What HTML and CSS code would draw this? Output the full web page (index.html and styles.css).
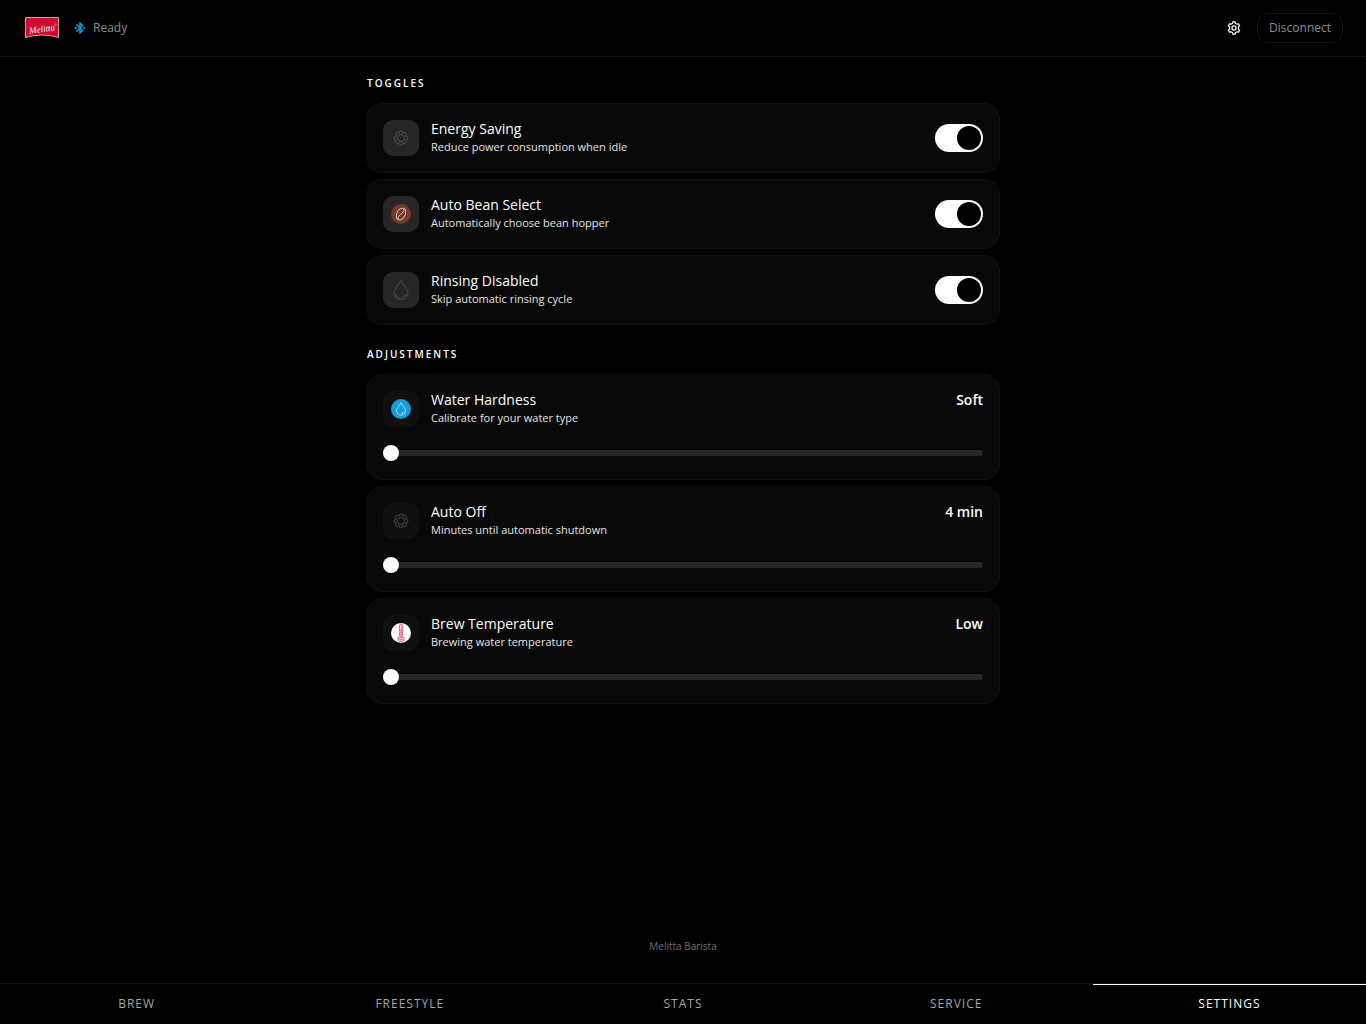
FILE: index.html
```
<!DOCTYPE html>
<html lang="en">

<head>
    <meta charset="UTF-8">
    <meta name="viewport" content="width=device-width, initial-scale=1.0">
    <title>Melitta Barista</title>
    <link rel="stylesheet" href="styles.css">
</head>

<body>
    <header class="header">
        <svg class="logo" viewBox="0 0 36 22" role="img" aria-label="Melitta">
            <path d="M1.5 .5H34.500V20.500Q18 15.500 1.500 20.500Z" fill="#d3072f" stroke="#c5a3a8" />
            <text class="logo-text" x="5" y="15" transform="rotate(-8 18 12)">Melitta</text>
            <circle cx="31.500" cy="7.500" r=".8" fill="none" stroke="#f5b5c0" stroke-width=".5" />
        </svg>
        <div class="status">
            <svg class="bluetooth" viewBox="0 0 24 24" fill="currentColor" stroke="currentColor" stroke-width=".6" aria-hidden="true">
                <path d="M19,10L17,12L19,14L21,12M14.88,16.29L13,18.17V14.41M13,5.83L14.88,7.71L13,9.58M17.71,7.71L12,2H11V9.58L6.41,5L5,6.41L10.59,12L5,17.58L6.41,19L11,14.41V22H12L17.7,16.29L13.41,12L17.71,7.71M7,12L5,10L3,12L5,14L7,12Z" />
            </svg>
            <span>Ready</span>
        </div>
        <button class="icon-btn" type="button" aria-label="Preferences">
            <svg viewBox="0 0 24 24" fill="none" stroke="currentColor" stroke-width="2.2" stroke-linejoin="round">
                <path d="M9.6 3.900 10 1.500h4l.4 2.400 2.900 1.700 2.300-.9 2 3.500-1.900 1.500v4.600l1.900 1.500-2 3.500-2.300-.9-2.900 1.700-.4 2.400h-4l-.4-2.400-2.900-1.700-2.300.9-2-3.500 1.900-1.500V9.700L2.400 8.200l2-3.500 2.300.9z" />
                <circle cx="12" cy="12" r="3.500" />
            </svg>
        </button>
        <button class="disconnect" type="button">Disconnect</button>
    </header>

    <main class="main">
        <section class="section">
            <h2>TOGGLES</h2>
            <label class="card row">
                <span class="tile tile-on">
                    <svg class="icon" viewBox="0 0 20 20" fill="none" stroke="#42454a" stroke-width="1.200">
                        <path d="M15 12.070A2.080 2.080 0 0 1 12.070 15A2.080 2.080 0 0 1 7.930 15A2.080 2.080 0 0 1 5 12.070A2.080 2.080 0 0 1 5 7.930A2.080 2.080 0 0 1 7.930 5A2.080 2.080 0 0 1 12.070 5A2.080 2.080 0 0 1 15 7.930A2.080 2.080 0 0 1 15 12.070Z" />
                        <circle cx="10" cy="10" r="3.400" />
                    </svg>
                </span>
                <span class="info">
                    <span class="title">Energy Saving</span>
                    <span class="desc">Reduce power consumption when idle</span>
                </span>
                <input class="switch" type="checkbox" role="switch" checked>
            </label>
            <label class="card row">
                <span class="tile tile-on">
                    <svg class="icon" viewBox="0 0 20 20" fill="none" stroke="#e0cdc6" stroke-width=".9">
                        <circle cx="10" cy="10" r="10" fill="#753a28" stroke="none" />
                        <ellipse cx="10" cy="10" rx="4.200" ry="6.300" transform="rotate(28 10 10)" />
                        <path d="M12.800 4.600c.7 3-1.400 4-2.800 5.400s-3.500 2.400-2.800 5.400" />
                    </svg>
                </span>
                <span class="info">
                    <span class="title">Auto Bean Select</span>
                    <span class="desc">Automatically choose bean hopper</span>
                </span>
                <input class="switch" type="checkbox" role="switch" checked>
            </label>
            <label class="card row">
                <span class="tile tile-on">
                    <svg class="icon" viewBox="0 0 20 20" fill="none" stroke="#43464b" stroke-width="1.100">
                        <path d="M10 .8C8 4.800 3 8.500 3 13a7 6.500 0 0 0 14 0C17 8.500 12 4.800 10 .8z" />
                        <path d="M4.500 13.500c.5 2.500 2.500 4 5 4.300M10.500 17.300c2.500-.2 4-1.500 4.700-3.300" />
                    </svg>
                </span>
                <span class="info">
                    <span class="title">Rinsing Disabled</span>
                    <span class="desc">Skip automatic rinsing cycle</span>
                </span>
                <input class="switch" type="checkbox" role="switch" checked>
            </label>
        </section>

        <section class="section">
            <h2>ADJUSTMENTS</h2>
            <div class="card">
                <div class="row">
                    <span class="tile">
                        <svg class="icon" viewBox="0 0 20 20" fill="none" stroke="#b5e3f5" stroke-width=".9">
                            <circle cx="10" cy="10" r="10" fill="#189dd3" stroke="none" />
                            <path d="M10 3.800C8.800 6.400 5.500 8.800 5.500 11.700a4.500 4.400 0 0 0 9 0C14.500 8.800 11.200 6.400 10 3.800z" />
                            <path d="M10.500 14.400c1.300-.2 2.200-.9 2.600-2" />
                        </svg>
                    </span>
                    <label class="info" for="hardness">
                        <span class="title">Water Hardness</span>
                        <span class="desc">Calibrate for your water type</span>
                    </label>
                    <output class="value" for="hardness">Soft</output>
                </div>
                <input class="slider" id="hardness" type="range" min="0" max="3" value="0">
            </div>
            <div class="card">
                <div class="row">
                    <span class="tile">
                        <svg class="icon" viewBox="0 0 20 20" fill="none" stroke="#393b3f" stroke-width="1.200">
                            <path d="M15 12.070A2.080 2.080 0 0 1 12.070 15A2.080 2.080 0 0 1 7.930 15A2.080 2.080 0 0 1 5 12.070A2.080 2.080 0 0 1 5 7.930A2.080 2.080 0 0 1 7.930 5A2.080 2.080 0 0 1 12.070 5A2.080 2.080 0 0 1 15 7.930A2.080 2.080 0 0 1 15 12.070Z" />
                            <circle cx="10" cy="10" r="3.400" />
                        </svg>
                    </span>
                    <label class="info" for="auto-off">
                        <span class="title">Auto Off</span>
                        <span class="desc">Minutes until automatic shutdown</span>
                    </label>
                    <output class="value" for="auto-off">4 min</output>
                </div>
                <input class="slider" id="auto-off" type="range" min="4" max="240" value="4">
            </div>
            <div class="card">
                <div class="row">
                    <span class="tile">
                        <svg class="icon" viewBox="0 0 20 20" fill="none" stroke="#f0557a" stroke-width=".9">
                            <circle cx="10" cy="10" r="10" fill="#fff" stroke="none" />
                            <path d="M8.500 13V2.500a1.500 1.500 0 0 1 3 0V13a3.100 3.100 0 1 1-3 0z" fill="#fbc4d0" />
                            <path d="M10 6v8M11.500 5H10M11.500 9H10" />
                            <circle cx="10" cy="15.600" r="1.300" fill="#fff" />
                        </svg>
                    </span>
                    <label class="info" for="temperature">
                        <span class="title">Brew Temperature</span>
                        <span class="desc">Brewing water temperature</span>
                    </label>
                    <output class="value" for="temperature">Low</output>
                </div>
                <input class="slider" id="temperature" type="range" min="0" max="2" value="0">
            </div>
        </section>
    </main>

    <footer class="footer">Melitta Barista</footer>

    <nav class="tabs">
        <a href="#brew">BREW</a>
        <a href="#freestyle">FREESTYLE</a>
        <a href="#stats">STATS</a>
        <a href="#service">SERVICE</a>
        <a class="active" href="#settings" aria-current="page">SETTINGS</a>
    </nav>
</body>

</html>
```
FILE: styles.css
```
* {
    margin: 0;
    padding: 0;
    box-sizing: border-box;
}

body {
    display: flex;
    flex-direction: column;
    min-height: 100vh;
    background-color: #000;
    color: #fff;
    font-family: "Open Sans", "Noto Sans", sans-serif;
}

button {
    font-family: inherit;
    background: none;
    border: 0;
    cursor: pointer;
}

/* header */
.header {
    display: flex;
    align-items: center;
    height: 57px;
    padding: 0 23px 0 24px;
    border-bottom: 1px solid #141414;
}

.logo {
    width: 36px;
    height: 22px;
}

.logo-text {
    font: italic 9px "Liberation Serif", serif;
    fill: #fff;
}

.status {
    display: flex;
    align-items: center;
    gap: 6px;
    margin-left: 13px;
    margin-right: auto;
    color: #8c8c8c;
    font-size: 12px;
    line-height: 16px;
}

.bluetooth {
    width: 14px;
    height: 14px;
    color: #0ea5dc;
}

.icon-btn {
    display: flex;
    padding: 8px;
    margin-right: 8px;
    color: #fff;
}

.icon-btn svg {
    width: 14px;
    height: 14px;
}

.disconnect {
    height: 30px;
    padding: 0 11px;
    border: 1px solid #141414;
    border-radius: 10px;
    color: #8c8c8c;
    font-size: 12px;
    line-height: 16px;
}

/* settings list */
.main {
    flex: 1;
    display: flex;
    flex-direction: column;
    gap: 22px;
    width: 100%;
    max-width: 634px;
    margin: 0 auto;
    padding-top: 19px;
}

.section {
    display: flex;
    flex-direction: column;
    gap: 6px;
}

.section h2 {
    margin-bottom: 6px;
    padding-left: 1px;
    font-size: 10px;
    font-weight: 600;
    line-height: 15px;
    letter-spacing: 2px;
}

.card {
    padding: 16px;
    border: 1px solid #111;
    border-radius: 16px;
    background-color: #080808;
}

.row {
    display: flex;
    align-items: center;
    gap: 12px;
}

.tile {
    display: flex;
    align-items: center;
    justify-content: center;
    width: 36px;
    height: 36px;
    border-radius: 10px;
    background-color: #101010;
}

.tile-on {
    background-color: #262626;
}

.icon {
    width: 20px;
    height: 20px;
}

.info {
    flex: 1;
    display: flex;
    flex-direction: column;
    line-height: 18px;
}

.title {
    font-size: 14px;
    font-weight: 500;
}

.desc {
    color: #e5e5e5;
    font-size: 11px;
}

.value {
    align-self: flex-start;
    font-size: 14px;
    font-weight: 600;
    line-height: 18px;
}

.switch {
    appearance: none;
    width: 48px;
    height: 28px;
    padding: 2px;
    border-radius: 14px;
    background-color: #262626;
    cursor: pointer;
}

.switch::before {
    content: "";
    display: block;
    width: 24px;
    height: 24px;
    border-radius: 50%;
    background-color: #000;
}

.switch:checked {
    background-color: #fff;
}

.switch:checked::before {
    margin-left: auto;
}

.slider {
    appearance: none;
    display: block;
    width: 100%;
    height: 20px;
    margin-top: 16px;
    background: none;
    cursor: pointer;
}

.slider::-webkit-slider-runnable-track {
    height: 6px;
    border-radius: 3px;
    background-color: #262626;
}

.slider::-webkit-slider-thumb {
    appearance: none;
    width: 16px;
    height: 16px;
    margin-top: -5px;
    border-radius: 50%;
    background-color: #fff;
}

/* bottom */
.footer {
    padding: 24px 0 29px;
    color: #707070;
    font-size: 10px;
    line-height: 15px;
    text-align: center;
}

.tabs {
    display: flex;
    border-top: 1px solid #141414;
}

.tabs a {
    flex: 1;
    padding-bottom: 1px;
    border-top: 1px solid transparent;
    color: #a6a6a6;
    font-size: 12px;
    font-weight: 500;
    line-height: 38px;
    letter-spacing: 1px;
    text-align: center;
    text-decoration: none;
}

.tabs .active {
    border-top-color: #fff;
    color: #fff;
}
```
